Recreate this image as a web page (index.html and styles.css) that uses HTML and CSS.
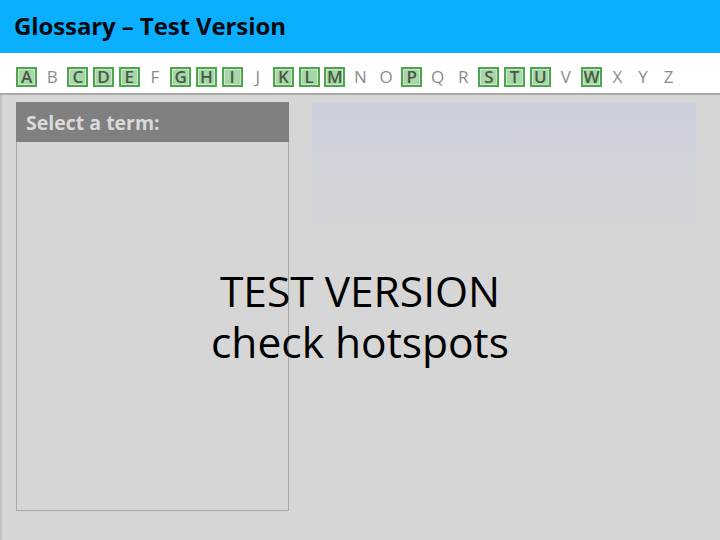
FILE: index.html
```html
<!DOCTYPE html>
<html>
<head>
<meta charset="utf-8">
<link rel="stylesheet" href="styles.css">
</head>
<body>
<div class="page">
  <header class="topbar"><h1 class="title">Glossary – Test Version</h1></header>
  <nav class="alpha">
    <span class="ltr hot">A</span><span class="ltr">B</span><span class="ltr hot">C</span><span class="ltr hot">D</span><span class="ltr hot">E</span><span class="ltr">F</span><span class="ltr hot">G</span><span class="ltr hot">H</span><span class="ltr hot">I</span><span class="ltr">J</span><span class="ltr hot">K</span><span class="ltr hot">L</span><span class="ltr hot">M</span><span class="ltr">N</span><span class="ltr">O</span><span class="ltr hot">P</span><span class="ltr">Q</span><span class="ltr">R</span><span class="ltr hot">S</span><span class="ltr hot">T</span><span class="ltr hot">U</span><span class="ltr">V</span><span class="ltr hot">W</span><span class="ltr">X</span><span class="ltr">Y</span><span class="ltr">Z</span>
  </nav>
  <main class="content">
    <section class="terms">
      <div class="terms-head">Select a term:</div>
      <div class="terms-body"></div>
    </section>
    <section class="detail"></section>
  </main>
  <div class="watermark">TEST VERSION<br>check hotspots</div>
</div>
</body>
</html>
```
FILE: styles.css
```css
html, body {
  margin: 0;
  padding: 0;
}
body {
  width: 720px;
  height: 540px;
  overflow: hidden;
  background: #d6d6d6;
  font-family: "Open Sans", "Noto Sans", sans-serif;
}
.page {
  position: relative;
  width: 720px;
  height: 540px;
  display: flex;
  flex-direction: column;
}
.topbar {
  height: 53px;
  background: #0bafff;
  display: flex;
  align-items: center;
  padding-left: 14px;
  padding-bottom: 3px;
  box-sizing: border-box;
}
.title {
  margin: 0;
  font-size: 24px;
  font-weight: 700;
  color: #050a10;
  letter-spacing: -0.1px;
}
.alpha {
  height: 42px;
  background: #ffffff;
  border-bottom: 2px solid #a9a9a9;
  box-sizing: border-box;
  display: grid;
  grid-template-columns: repeat(26, 21px);
  column-gap: 4.7px;
  align-items: center;
  padding-left: 16px;
  padding-top: 7px;
}
.ltr {
  height: 20px;
  display: flex;
  align-items: center;
  justify-content: center;
  font-size: 17px;
  line-height: 1;
  color: #8c8c8c;
}
.hot {
  box-sizing: border-box;
  border: 2px solid #4da64d;
  background: #a8d6a8;
  box-shadow: inset 0 0 0 1px #cbe7cb;
  color: #465a46;
  font-weight: 600;
}
.content {
  flex: 1;
  display: flex;
  gap: 23px;
  padding: 7px 24px 0 16px;
  border-left: 2px solid #c4c4c4;
}
.terms {
  width: 273px;
  height: 409px;
  display: flex;
  flex-direction: column;
  margin-left: -2px;
}
.terms-head {
  height: 40px;
  background: #808080;
  color: #dadada;
  font-size: 19.5px;
  font-weight: 700;
  padding-left: 10px;
  display: flex;
  align-items: center;
  box-sizing: border-box;
}
.terms-body {
  flex: 1;
  border: 1px solid #a9a9a9;
  border-top: none;
}
.detail {
  width: 384px;
  height: 162px;
  background: linear-gradient(to bottom, #ccd0da 0%, #d1d3d8 55%, #d6d6d6 100%);
}
.watermark {
  position: absolute;
  left: 0;
  right: 0;
  top: 265px;
  text-align: center;
  font-size: 42.5px;
  line-height: 51px;
  color: #000000;
}
```
